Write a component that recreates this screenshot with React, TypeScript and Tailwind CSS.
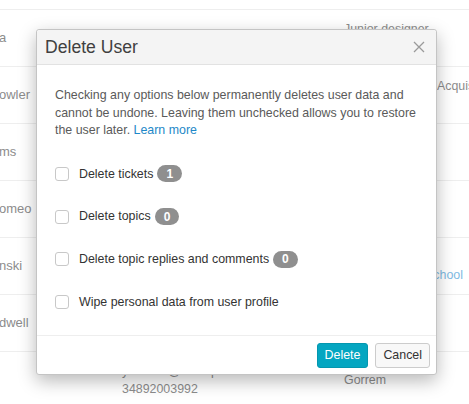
import React from "react";

type Row = { name: string; mid: string[]; right: React.ReactNode[] };

const rows: Row[] = [
  { name: "Joanna", mid: ["34892001234"], right: ["Junior designer", "Acme Inc"] },
  { name: "Fowler", mid: ["fowler@example.com", "34892004411"], right: ["Head of Content Acquisitions", "Gorrem"] },
  { name: "Adams", mid: ["adams@example.com", "34892001177"], right: ["Teacher"] },
  { name: "Romeo", mid: ["romeo@example.com", "34892009981"], right: ["Designer"] },
  {
    name: "Kowalinski",
    mid: ["kowal@example.com", "34892007765"],
    right: ["Principal", <span key="s" className="text-[#7fbbe3]">Greene Valley School</span>],
  },
  { name: "Caldwell", mid: ["caldwell@example.com", "34892005523"], right: ["Manager"] },
  { name: "Yasmine", mid: ["yasmine@example.com", "34892003992"], right: ["Gorrem"] },
];

const visible = ["a", "owler", "ms", "omeo", "nski", "dwell", ""];

function Checkbox() {
  return <span className="block w-[14px] h-[14px] rounded-[3px] border border-[#c8c8c8] bg-white shrink-0" />;
}

function Badge({ n }: { n: number }) {
  return (
    <span className="ml-[4px] inline-flex items-center justify-center h-[17px] px-[9px] rounded-full bg-[#8f8f8f] text-white text-[12px] font-bold leading-none">
      {n}
    </span>
  );
}

export default function App() {
  const options: { label: string; n?: number }[] = [
    { label: "Delete tickets", n: 1 },
    { label: "Delete topics", n: 0 },
    { label: "Delete topic replies and comments", n: 0 },
    { label: "Wipe personal data from user profile" },
  ];
  return (
    <div className="relative w-[469px] h-[404px] overflow-hidden bg-white font-['Liberation_Sans',Arial,sans-serif] text-[12.4px]">
      <div className="h-[10px] border-b border-[#eeeeee]" />
      {rows.map((r, i) => (
        <div key={i} className="flex h-[57px] border-b border-[#eeeeee] items-center text-[#8c8c8c] whitespace-nowrap leading-[18px]">
          <div className="ml-[-1px] w-[123px] shrink-0 text-[13px]">{visible[i]}</div>
          <div className="w-[222px] shrink-0 flex flex-col">
            {r.mid.map((m, j) => (
              <div key={j}>{m}</div>
            ))}
          </div>
          <div className="shrink-0 flex flex-col">
            {r.right.map((m, j) => (
              <div key={j}>{m}</div>
            ))}
          </div>
        </div>
      ))}

      <div className="absolute left-[36px] top-[29px] w-[401px] h-[346px] flex flex-col bg-white border border-[#c4c4c4] rounded-[3px] shadow-[0_6px_18px_rgba(0,0,0,0.28)]">
        <div className="h-[35px] shrink-0 flex items-center justify-between pl-[8px] pr-[11px] bg-[#f4f4f4] border-b border-[#e2e2e2] rounded-t-[3px]">
          <span className="text-[17.6px] text-[#404040]">Delete User</span>
          <svg width="12" height="12" viewBox="0 0 12 12" className="mt-[-1px]">
            <path d="M1 1 L11 11 M11 1 L1 11" stroke="#9a9a9a" strokeWidth="1.3" fill="none" />
          </svg>
        </div>
        <div className="flex-1 pt-[22px] pl-[18px] pr-[18px]">
          <p className="leading-[17.5px] text-[#5a5a5a]">
            Checking any options below permanently deletes user data and cannot be undone. Leaving them unchecked allows you to restore the user later.{" "}
            <span className="text-[#1e88c8]">Learn more</span>
          </p>
          <div className="mt-[13px] flex flex-col">
            {options.map((o, i) => (
              <div key={i} className="h-[42.7px] flex items-center">
                <Checkbox />
                <span className="ml-[10px] text-[#333333]">{o.label}</span>
                {o.n !== undefined && <Badge n={o.n} />}
              </div>
            ))}
          </div>
        </div>
        <div className="h-[39px] shrink-0 border-t border-[#eeeeee] flex items-center justify-end gap-[7px] pr-[6px]">
          <button className="h-[25px] px-[7px] rounded-[3px] bg-[#04a6c1] border border-[#0497af] text-white text-[12.4px]">
            Delete
          </button>
          <button className="h-[25px] px-[7px] rounded-[3px] bg-[#f8f8f8] border border-[#cccccc] text-[#333333] text-[12.4px]">
            Cancel
          </button>
        </div>
      </div>
    </div>
  );
}
